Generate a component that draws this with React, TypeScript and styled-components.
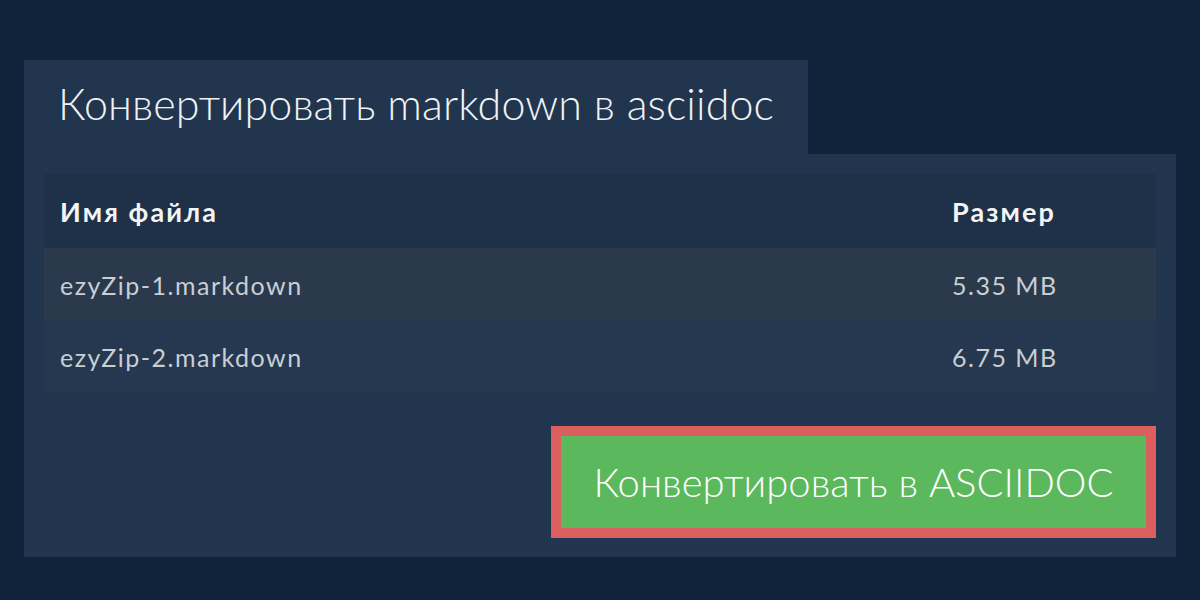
import styled, { createGlobalStyle } from 'styled-components';

const GlobalStyle = createGlobalStyle`
  html, body {
    margin: 0;
    padding: 0;
    background: #10233a;
    font-family: Lato, 'Noto Sans', sans-serif;
  }
`;

const Page = styled.div`
  width: 1200px;
  height: 600px;
  box-sizing: border-box;
  padding: 60px 24px 0;
  background: #10233a;
`;

const Tab = styled.div`
  display: inline-block;
  background: #21364e;
  padding: 0 34px;
  height: 94px;
  line-height: 88px;
  color: #f0f2f4;
  font-size: 43px;
  font-weight: 300;
  letter-spacing: 0.1px;
`;

const Panel = styled.div`
  background: #21364e;
  padding: 20px 20px 19px;
  display: flex;
  flex-direction: column;
`;

const Table = styled.div`
  display: flex;
  flex-direction: column;
`;

const Row = styled.div<{ $bg: string; $h: number; $head?: boolean }>`
  display: grid;
  grid-template-columns: 1fr 204px;
  align-items: center;
  height: ${(p) => p.$h}px;
  padding-left: 16px;
  background: ${(p) => p.$bg};
  color: ${(p) => (p.$head ? '#f2f4f6' : '#c9ced5')};
  font-size: ${(p) => (p.$head ? 27 : 25)}px;
  font-weight: ${(p) => (p.$head ? 700 : 400)};
  letter-spacing: ${(p) => (p.$head ? 2.1 : 1.5)}px;
`;

const Actions = styled.div`
  display: flex;
  justify-content: flex-end;
  margin-top: 33px;
`;

const ConvertButton = styled.button`
  border: 10px solid #dc5f5f;
  background: #5cb85c;
  color: #ffffff;
  width: 605px;
  height: 112px;
  font-family: Lato, 'Noto Sans', sans-serif;
  font-size: 40px;
  font-weight: 300;
  padding: 0;
  cursor: pointer;
`;

const files = [
  { name: 'ezyZip-1.markdown', size: '5.35 MB', bg: '#2a3a4c', h: 73 },
  { name: 'ezyZip-2.markdown', size: '6.75 MB', bg: '#25384f', h: 72 },
];

export default function App() {
  return (
    <Page>
      <GlobalStyle />
      <Tab>Конвертировать markdown в asciidoc</Tab>
      <Panel>
        <Table>
          <Row $bg="#1f3148" $h={74} $head>
            <span>Имя файла</span>
            <span>Размер</span>
          </Row>
          {files.map((f) => (
            <Row key={f.name} $bg={f.bg} $h={f.h}>
              <span>{f.name}</span>
              <span>{f.size}</span>
            </Row>
          ))}
        </Table>
        <Actions>
          <ConvertButton>Конвертировать в ASCIIDOC</ConvertButton>
        </Actions>
      </Panel>
    </Page>
  );
}
